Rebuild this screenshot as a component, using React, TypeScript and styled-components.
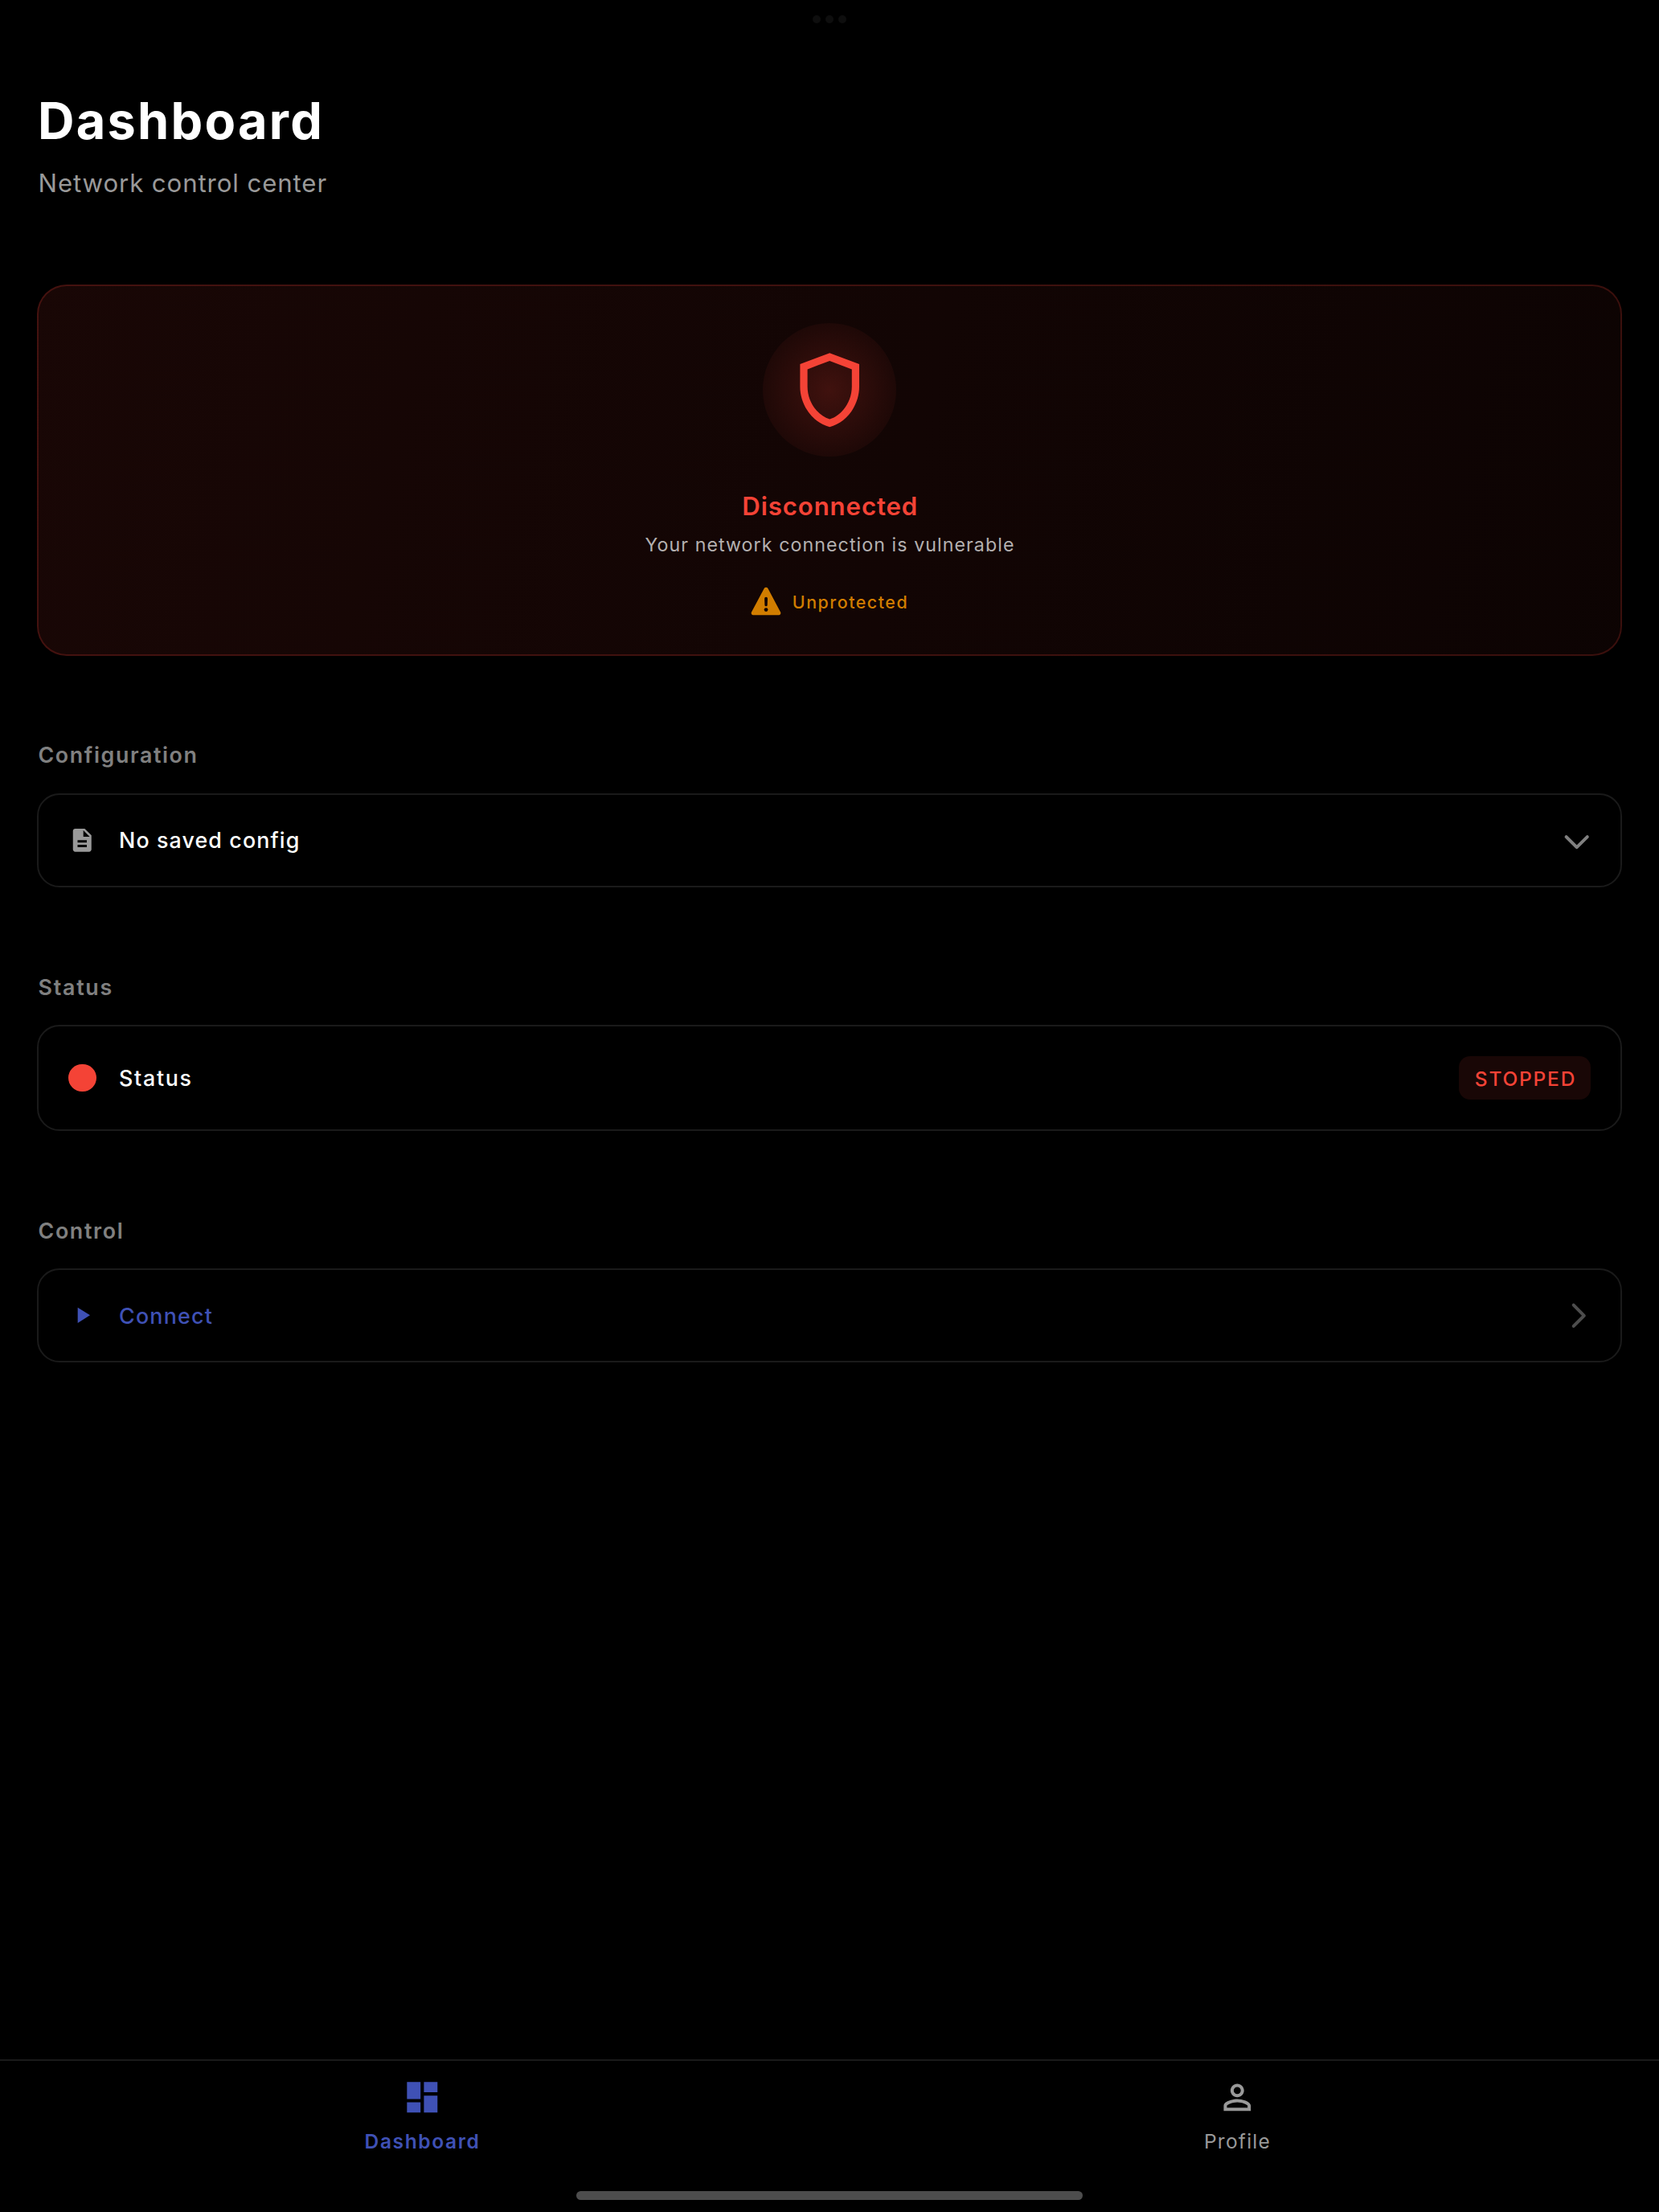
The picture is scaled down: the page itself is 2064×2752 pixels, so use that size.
import React from 'react';
import styled, { createGlobalStyle } from 'styled-components';

const color = {
  background: '#000000',
  danger: '#f44336',
  accent: '#3f51b5',
  warning: '#d17d00',
  line: '#1a1a1a',
};

const GlobalStyle = createGlobalStyle`
  *, *::before, *::after { box-sizing: border-box; }
  html, body { margin: 0; background: ${color.background}; }
  body { font-family: Inter, 'Liberation Sans', sans-serif; -webkit-font-smoothing: antialiased; }
  svg { display: block; flex: none; }
`;

const Screen = styled.div`
  display: flex;
  flex-direction: column;
  width: 2064px;
  height: 2752px;
  overflow: hidden;
  background: ${color.background};
`;

const MultitaskDots = styled.div`
  display: flex;
  justify-content: center;
  gap: 6px;
  height: 29px;
  padding-top: 19px;
`;

const Dot = styled.span`
  width: 10px;
  height: 10px;
  border-radius: 50%;
  background: #0e0e0e;
`;

const Content = styled.main`
  flex: 1;
  display: flex;
  flex-direction: column;
  padding: 83px 46px 0;
`;

const Header = styled.header`
  display: flex;
  flex-direction: column;
  gap: 21px;
  margin-bottom: 107px;
  padding-left: 1px;
`;

const Title = styled.h1`
  margin: 0;
  font-size: 63px;
  line-height: 76px;
  font-weight: 700;
  letter-spacing: 2.25px;
  color: #ffffff;
`;

const Subtitle = styled.p`
  margin: 0;
  padding-left: 0.5px;
  font-size: 31.2px;
  line-height: 38px;
  letter-spacing: 0.9px;
  color: #999999;
`;

const StatusCard = styled.section`
  display: flex;
  flex-direction: column;
  align-items: center;
  height: 462px;
  padding-top: 46px;
  border: 2px solid rgba(244, 67, 54, 0.2);
  border-radius: 37px;
  background: linear-gradient(103.2deg, rgba(244, 67, 54, 0.1), rgba(244, 67, 54, 0.05)) border-box;
`;

const ShieldHalo = styled.div`
  display: flex;
  align-items: center;
  justify-content: center;
  width: 166px;
  height: 166px;
  border-radius: 50%;
  background: radial-gradient(closest-side, rgba(244, 67, 54, 0.2), rgba(244, 67, 54, 0.05));
  color: ${color.danger};
`;

const StatusTitle = styled.h2`
  margin: 43px 0 0;
  padding-left: 1.5px;
  font-size: 31.2px;
  line-height: 38px;
  font-weight: 600;
  letter-spacing: 0.88px;
  color: ${color.danger};
`;

const StatusText = styled.p`
  margin: 15px 0 0;
  padding-left: 1px;
  font-size: 23.2px;
  line-height: 28px;
  letter-spacing: 1.07px;
  color: #b4b0b0;
`;

const Warning = styled.div`
  display: flex;
  align-items: center;
  gap: 14px;
  height: 40px;
  margin-top: 36px;
  color: ${color.warning};
`;

const WarningLabel = styled.span`
  padding-top: 2px;
  font-size: 21.4px;
  line-height: 40px;
  font-weight: 500;
  letter-spacing: 1.52px;
`;

const Sections = styled.div`
  display: flex;
  flex-direction: column;
  gap: 107px;
  margin-top: 106px;
`;

const Section = styled.section`
  display: flex;
  flex-direction: column;
  gap: 30px;

  &:first-child {
    gap: 31px;
  }
`;

const SectionTitle = styled.h3<{ $tracking: number }>`
  margin: 0;
  padding-left: 1.5px;
  font-size: 26.8px;
  line-height: 34px;
  font-weight: 600;
  letter-spacing: ${(p) => p.$tracking}px;
  color: #808080;
`;

const Tile = styled.div<{ $tall?: boolean }>`
  display: flex;
  align-items: center;
  height: ${(p) => (p.$tall ? 132 : 117)}px;
  padding: 0 37px 0 34px;
  border: 2px solid ${color.line};
  border-radius: 28px;
`;

const Leading = styled.span<{ $color: string }>`
  display: flex;
  align-items: center;
  justify-content: center;
  width: 41px;
  height: 41px;
  margin-right: 25px;
  color: ${(p) => p.$color};
`;

const StatusLight = styled.span`
  width: 34.5px;
  height: 34.5px;
  border-radius: 50%;
  background: ${color.danger};
`;

const TileLabel = styled.span<{ $color: string; $tracking: number; $lift?: number }>`
  flex: 1;
  padding-bottom: ${(p) => p.$lift ?? 0}px;
  font-size: 26.8px;
  line-height: 34px;
  font-weight: 500;
  letter-spacing: ${(p) => p.$tracking}px;
  color: ${(p) => p.$color};
`;

const Badge = styled.span`
  display: flex;
  align-items: center;
  justify-content: center;
  width: 164px;
  height: 54px;
  padding: 2px 0 0 2px;
  border-radius: 14px;
  background: rgba(244, 67, 54, 0.1);
  font-size: 24.5px;
  line-height: 54px;
  font-weight: 500;
  letter-spacing: 1.8px;
  color: ${color.danger};
`;

const NavBar = styled.nav`
  display: flex;
  height: 164px;
  padding: 20px 18px 0;
  border-top: 2px solid ${color.line};
`;

const NavItem = styled.a<{ $active?: boolean }>`
  flex: 1;
  display: flex;
  flex-direction: column;
  align-items: center;
  gap: 14.4px;
  font-size: 24.5px;
  line-height: 30px;
  font-weight: ${(p) => (p.$active ? 600 : 400)};
  letter-spacing: ${(p) => (p.$active ? 1.62 : 1.25)}px;
  color: ${(p) => (p.$active ? color.accent : '#999999')};
`;

const NavLabel = styled.span`
  padding-left: 1px;
`;

const HomeIndicatorArea = styled.div`
  display: flex;
  justify-content: center;
  height: 26px;
`;

const HomeIndicator = styled.span`
  width: 630px;
  height: 11px;
  border-radius: 6px;
  background: #4d4d4d;
`;

function MaterialIcon({ d, size }: { d: string; size: number }) {
  return (
    <svg width={size} height={size} viewBox="0 0 24 24" fill="currentColor">
      <path d={d} />
    </svg>
  );
}

const SHIELD =
  'M12 2 4 5v6.09c0 5.05 3.41 9.76 8 10.91 4.59-1.15 8-5.86 8-10.91V5l-8-3zm6 9.09c0 4-2.55 7.7-6 8.83-3.45-1.13-6-4.82-6-8.83v-4.7l6-2.25 6 2.25v4.7z';
const DOCUMENT =
  'M14.17 2H6c-1.1 0-2 .9-2 2v16c0 1.1.9 2 2 2h12c1.1 0 2-.9 2-2V7.83L14.17 2zM16 18H8v-2h8v2zm0-4H8v-2h8v2zm-3-5V3.5L18.5 9H13z';
const DASHBOARD = 'M3 13h8V3H3v10zm0 8h8v-6H3v6zm10 0h8V11h-8v10zm0-18v6h8V3h-8z';
const PERSON =
  'M12 5.9a2.1 2.1 0 1 1 0 4.2 2.1 2.1 0 0 1 0-4.2m0 9c2.97 0 6.1 1.46 6.1 2.1v1.1H5.9V17c0-.64 3.13-2.1 6.1-2.1M12 4C9.79 4 8 5.79 8 8s1.79 4 4 4 4-1.79 4-4-1.79-4-4-4zm0 9c-2.67 0-8 1.34-8 4v3h16v-3c0-2.66-5.33-4-8-4z';

function WarningIcon() {
  return (
    <svg width="38" height="36" viewBox="0 0 38 36">
      <path
        d="M16.6 2.2a2.8 2.8 0 0 1 4.9 0L37 31.6a2.4 2.4 0 0 1-2.1 3.6H3.1A2.4 2.4 0 0 1 1 31.6z"
        fill="currentColor"
      />
      <path d="M17.1 14.8a1.95 1.95 0 0 1 3.9 0l-.3 7.9a1.65 1.65 0 0 1-3.3 0z" fill="#110303" />
      <circle cx="19.05" cy="28.6" r="2.4" fill="#110303" />
    </svg>
  );
}

function PlayIcon() {
  return (
    <svg width="41" height="41" viewBox="0 0 41 41" fill="currentColor">
      <path d="M14.7 10.7v19.3L30 20.3z" />
    </svg>
  );
}

function Chevron({ d, stroke }: { d: string; stroke: string }) {
  return (
    <svg width="34" height="34" viewBox="0 0 34 34" fill="none" stroke={stroke} strokeWidth="4" strokeLinecap="round" strokeLinejoin="round">
      <path d={d} />
    </svg>
  );
}

export default function App() {
  return (
    <Screen>
      <GlobalStyle />
      <MultitaskDots>
        <Dot />
        <Dot />
        <Dot />
      </MultitaskDots>
      <Content>
        <Header>
          <Title>Dashboard</Title>
          <Subtitle>Network control center</Subtitle>
        </Header>
        <StatusCard>
          <ShieldHalo>
            <MaterialIcon d={SHIELD} size={110.4} />
          </ShieldHalo>
          <StatusTitle>Disconnected</StatusTitle>
          <StatusText>Your network connection is vulnerable</StatusText>
          <Warning>
            <WarningIcon />
            <WarningLabel>Unprotected</WarningLabel>
          </Warning>
        </StatusCard>
        <Sections>
          <Section>
            <SectionTitle $tracking={1.6}>Configuration</SectionTitle>
            <Tile>
              <Leading $color="#999999">
                <MaterialIcon d={DOCUMENT} size={34.5} />
              </Leading>
              <TileLabel $color="#ffffff" $tracking={1.13} $lift={1}>
                No saved config
              </TileLabel>
              <Chevron d="M3.6 12.1 16.7 25.1 29.8 12.1" stroke="#808080" />
            </Tile>
          </Section>
          <Section>
            <SectionTitle $tracking={1.75}>Status</SectionTitle>
            <Tile $tall>
              <Leading $color={color.danger}>
                <StatusLight />
              </Leading>
              <TileLabel $color="#ffffff" $tracking={1.7}>
                Status
              </TileLabel>
              <Badge>STOPPED</Badge>
            </Tile>
          </Section>
          <Section>
            <SectionTitle $tracking={1.65}>Control</SectionTitle>
            <Tile>
              <Leading $color={color.accent}>
                <PlayIcon />
              </Leading>
              <TileLabel $color={color.accent} $tracking={1.25}>
                Connect
              </TileLabel>
              <Chevron d="M12.7 3.7 25.8 16.8 12.7 29.9" stroke="#4d4d4d" />
            </Tile>
          </Section>
        </Sections>
      </Content>
      <NavBar>
        <NavItem $active>
          <MaterialIcon d={DASHBOARD} size={50.6} />
          <NavLabel>Dashboard</NavLabel>
        </NavItem>
        <NavItem>
          <MaterialIcon d={PERSON} size={50.6} />
          <NavLabel>Profile</NavLabel>
        </NavItem>
      </NavBar>
      <HomeIndicatorArea>
        <HomeIndicator />
      </HomeIndicatorArea>
    </Screen>
  );
}
